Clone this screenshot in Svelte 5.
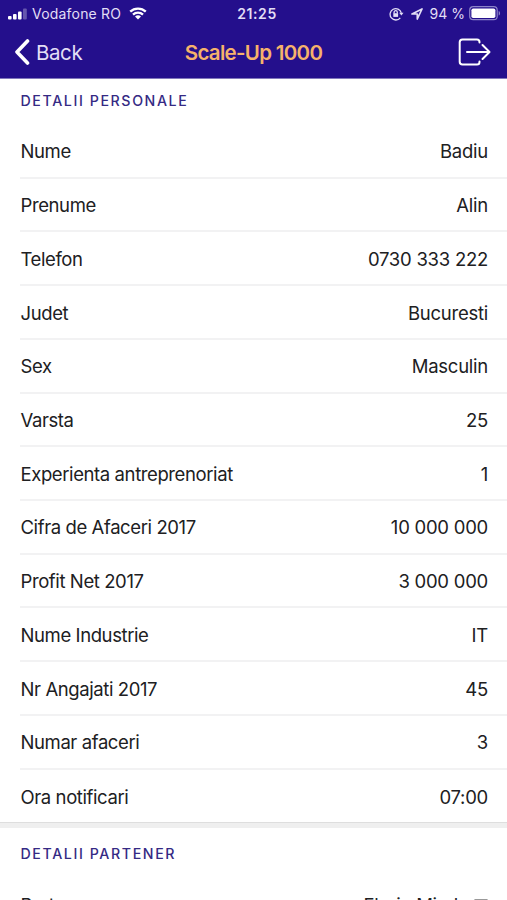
<script>
  const personal = [
    { label: 'Nume', value: 'Badiu' },
    { label: 'Prenume', value: 'Alin' },
    { label: 'Telefon', value: '0730 333 222' },
    { label: 'Judet', value: 'Bucuresti' },
    { label: 'Sex', value: 'Masculin' },
    { label: 'Varsta', value: '25' },
    { label: 'Experienta antreprenoriat', value: '1' },
    { label: 'Cifra de Afaceri 2017', value: '10 000 000' },
    { label: 'Profit Net 2017', value: '3 000 000' },
    { label: 'Nume Industrie', value: 'IT' },
    { label: 'Nr Angajati 2017', value: '45' },
    { label: 'Numar afaceri', value: '3' },
    { label: 'Ora notificari', value: '07:00' }
  ];
</script>

<div class="screen">
  <header>
    <div class="status">
      <div class="side">
        <svg class="signal" width="20" height="12" viewBox="0 0 20 12" fill="#fff">
          <rect x="0" y="8" width="3.6" height="3.4" rx="1" />
          <rect x="5" y="6" width="3.6" height="5.4" rx="1" />
          <rect x="10" y="3.5" width="3.6" height="7.9" rx="1" />
          <rect x="15" y="0.5" width="3.8" height="10.9" rx="1" opacity="0.3" />
        </svg>
        <span class="carrier">Vodafone RO</span>
        <svg class="wifi" width="18" height="13" viewBox="0 0 18 13">
          <path d="M1.2 4.7a11.2 11.2 0 0 1 15.6 0M4 7.7a7.2 7.2 0 0 1 10 0" fill="none" stroke="#fff" stroke-width="2.3" />
          <path d="M9 12.6 6 9.6a4.3 4.3 0 0 1 6 0z" fill="#fff" />
        </svg>
      </div>
      <span class="time">21:25</span>
      <div class="side right">
        <svg class="lock" width="15" height="14" viewBox="0 0 15 14" fill="none" stroke="#e2def5" stroke-width="1.3">
          <path d="M11.3 10.8a5.7 5.7 0 1 1 1-5" />
          <path d="M10.2 5.7h4.3l-2.1 2.8z" fill="#e2def5" stroke="none" />
          <path d="M5.1 6.5V5.3a1.6 1.6 0 0 1 3.2 0v1.2" />
          <rect x="4.3" y="6.2" width="4.8" height="3.7" fill="#e2def5" stroke="none" />
        </svg>
        <svg class="location" width="12" height="12" viewBox="0 0 12 12">
          <path d="M1 6 11 1 6.3 11V6z" fill="none" stroke="#e2def5" stroke-width="1.7" stroke-linejoin="round" />
        </svg>
        <span class="percent">94 %</span>
        <svg class="battery" width="32" height="15" viewBox="0 0 32 15">
          <rect x="0.7" y="0.7" width="27.5" height="13" rx="3.5" fill="none" stroke="#8d83c9" stroke-width="1.2" />
          <rect x="2.4" y="2.4" width="24" height="9.6" rx="1.8" fill="#fff" />
          <path d="M29.7 4.9c1.8.6 1.8 4 0 4.6z" fill="#8d83c9" />
        </svg>
      </div>
    </div>
    <nav>
      <button class="back" type="button">
        <svg width="16" height="26" viewBox="0 0 16 26">
          <path d="M13.5 2 3 13 13.5 24" fill="none" stroke="#fff" stroke-width="3.6" stroke-linecap="round" stroke-linejoin="round" />
        </svg>
        <span>Back</span>
      </button>
      <h1>Scale-Up 1000</h1>
      <button class="logout" type="button" aria-label="Logout">
        <svg width="33" height="28" viewBox="0 0 33 28" fill="none" stroke="#fff" stroke-width="2" stroke-linecap="round" stroke-linejoin="round">
          <path d="M21.5 4.5V4A2.5 2.5 0 0 0 19 1.5H4.5A2.8 2.8 0 0 0 1.7 4.3v19.4a2.8 2.8 0 0 0 2.8 2.8H19a2.5 2.5 0 0 0 2.5-2.5v-.5" />
          <path d="M9 14h22M24.5 7l7 7-7 7" />
        </svg>
      </button>
    </nav>
  </header>

  <section>
    <h2>Detalii personale</h2>
    <ul>
      {#each personal as item}
        <li>
          <span class="label">{item.label}</span>
          <span>{item.value}</span>
        </li>
      {/each}
    </ul>
  </section>

  <section class="partner">
    <h2>Detalii partener</h2>
    <ul>
      <li>
        <span class="label">Partener</span>
        <span class="select">
          Florin Mirel
          <svg width="14" height="12" viewBox="0 0 14 12"><path d="M0 0h14L7 8z" fill="#999" /></svg>
        </span>
      </li>
    </ul>
  </section>
</div>

<style>
:global(body) {
  margin: 0;
  background: #fff;
}
.screen {
  height: 900px;
  overflow: hidden;
  background: #fff;
  color: #202022;
  font-family: Inter, "Liberation Sans", sans-serif;
}
header {
  box-sizing: border-box;
  height: 79px;
  background: #240f8c;
  border-bottom: 1px solid #8177bc;
  color: #e2def5;
}
.status {
  display: grid;
  grid-template-columns: 1fr auto 1fr;
  align-items: center;
  height: 27px;
  padding: 0 6px 0 8px;
  font-size: 14px;
}
.side {
  display: flex;
  align-items: center;
}
.right {
  justify-content: flex-end;
}
.carrier {
  margin: 0 8px 0 4px;
  letter-spacing: 0.2px;
}
.time {
  padding-left: 5px;
  font-weight: 600;
  letter-spacing: 0.6px;
}
.lock {
  margin-right: 7px;
}
.location {
  margin-right: 7px;
}
.percent {
  margin-right: 4px;
  white-space: nowrap;
}
nav {
  display: grid;
  grid-template-columns: 1fr auto 1fr;
  align-items: center;
  height: 50px;
  padding: 0 16px 0 14px;
}
button {
  display: flex;
  align-items: center;
  padding: 0;
  border: 0;
  background: none;
  color: inherit;
  font: inherit;
}
.back {
  gap: 6px;
  font-size: 20.5px;
  letter-spacing: -0.4px;
}
.logout {
  justify-self: end;
}
h1 {
  margin: 0;
  padding-left: 2px;
  color: #f6b26b;
  font-size: 20.5px;
  font-weight: 600;
  letter-spacing: -0.7px;
}
h2 {
  display: flex;
  align-items: center;
  box-sizing: border-box;
  height: 46px;
  margin: 0;
  padding: 0 20.5px 4px;
  color: #352a84;
  font-size: 14.2px;
  font-weight: 500;
  letter-spacing: 1.6px;
  text-transform: uppercase;
}
ul {
  margin: 0;
  padding: 0 0 0 20px;
  list-style: none;
}
li {
  display: flex;
  align-items: center;
  justify-content: space-between;
  box-sizing: border-box;
  height: 53.72px;
  padding: 1px 19px 0 0.5px;
  border-bottom: 2px solid #f2f2f3;
  font-size: 18.5px;
  letter-spacing: -0.25px;
}
li:last-child {
  border-bottom: 0;
}
.label {
  letter-spacing: -0.4px;
}
.partner {
  border-top: 5px solid #efefef;
  box-shadow: 0 -1px #dedede;
}
.partner h2 {
  height: 49.5px;
  padding-bottom: 0;
}
.select {
  display: flex;
  align-items: center;
  gap: 16px;
}
</style>
